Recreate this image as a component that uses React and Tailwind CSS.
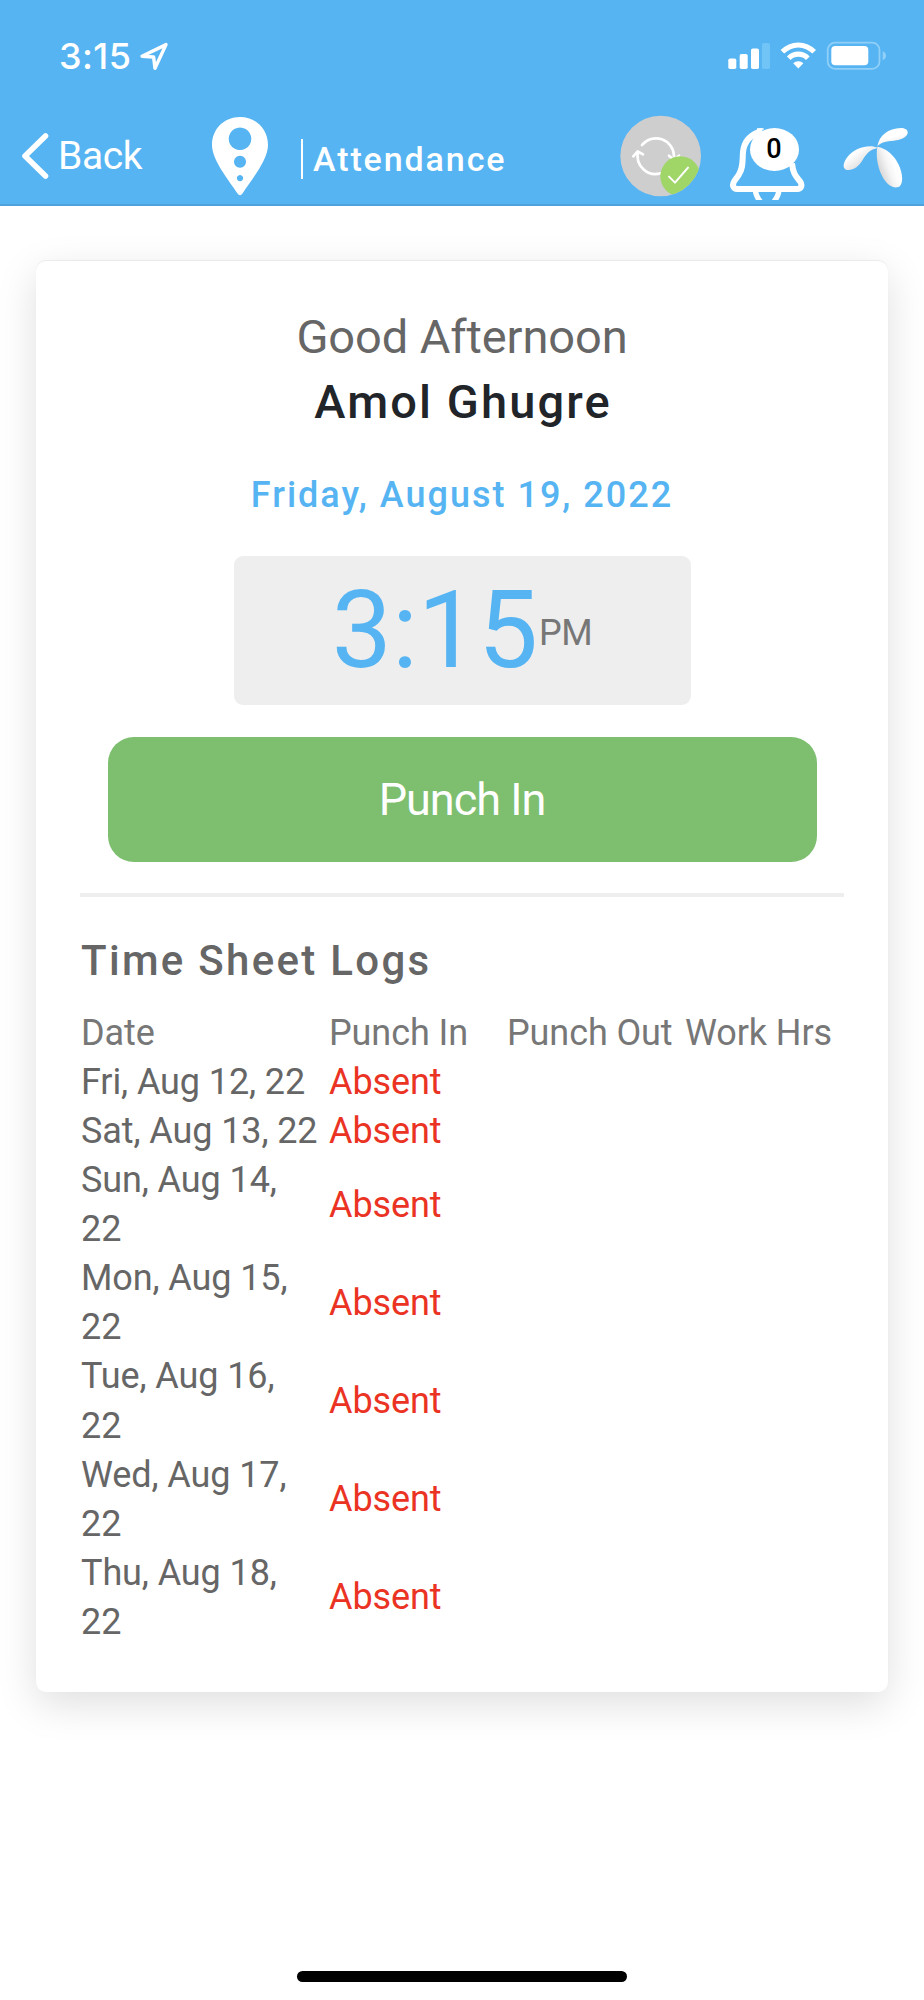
import React from 'react';
import clsx from 'clsx';

const LOGS = [
    { date: 'Fri, Aug 12, 22', status: 'Absent' },
    { date: 'Sat, Aug 13, 22', status: 'Absent' },
    { date: 'Sun, Aug 14, 22', status: 'Absent' },
    { date: 'Mon, Aug 15, 22', status: 'Absent' },
    { date: 'Tue, Aug 16, 22', status: 'Absent' },
    { date: 'Wed, Aug 17, 22', status: 'Absent' },
    { date: 'Thu, Aug 18, 22', status: 'Absent' },
];

const COLUMNS = ['Date', 'Punch In', 'Punch Out', 'Work Hrs'];

const LocationArrow = () => (
    <svg className="ml-[8px] h-[30px] w-[30px]" viewBox="0 0 30 30" fill="none" stroke="#fff" strokeWidth="3.4" strokeLinejoin="round">
        <path d="M3 15.2 L27 3.6 L16 27.3 L14.6 16 Z" />
    </svg>
);

const StatusIcons = () => (
    <svg className="h-[30px] w-[160px]" viewBox="0 0 160 30" fill="#fff">
        {/* Signal */}
        <rect x="0.3" y="17.5" width="8" height="10.5" rx="1.8" />
        <rect x="11.7" y="13" width="8" height="15" rx="1.8" />
        <rect x="23" y="7.5" width="8" height="20.5" rx="1.8" />
        <rect x="34" y="2.1" width="8" height="25.9" rx="1.8" fill="#70c4f6" />
        {/* Wifi */}
        <path d="M52.6 9 A24.5 24.5 0 0 1 88 9 L84.4 12.6 A19.6 19.6 0 0 0 56.2 12.6 Z" />
        <path d="M58.9 15.4 A15.8 15.8 0 0 1 81.700 15.4 L78 19 A10.8 10.8 0 0 0 62.6 19 Z" />
        <path d="M65.2 22.3 A7.4 7.4 0 0 1 75.4 22.3 L70.3 27.4 Z" />
        {/* Battery */}
        <rect x="99.7" y="1.6" width="51.8" height="26.2" rx="7.4" fill="none" stroke="#8fcff8" strokeWidth="1.8" />
        <rect x="103.3" y="5" width="37" height="19.2" rx="4" />
        <path d="M154.7 10.300 Q158 11.600 158 14.800 Q158 18 154.7 19.300 Z" fill="#8fcff8" />
    </svg>
);

const BackChevron = () => (
    <svg className="h-[50px] w-[30px]" viewBox="0 0 30 50" fill="none" stroke="#fff" strokeWidth="5.6" strokeLinecap="round" strokeLinejoin="round">
        <path d="M25.5 5 L5 25 L25.5 45" />
    </svg>
);

const PinIcon = () => (
    <svg className="h-[79px] w-[56px]" viewBox="0 0 56 79">
        <path fill="#fff" fillRule="evenodd" d="M28 0 C44 0 56 12 56 28 C56 43 40 62 30.5 76.5 Q28 80 25.500 76.5 C16 62 0 43 0 28 C0 12 12 0 28 0 Z M28 10.500 a11.300 11.300 0 1 0 0.01 0 Z M28 38.700 a6 6 0 1 0 0.01 0 Z M28 58 a3.100 3.100 0 1 0 0.01 0 Z" />
    </svg>
);

const SyncIcon = () => (
    <svg className="h-[82px] w-[82px]" viewBox="0 0 246 246" fill="none" stroke="#fff" strokeLinecap="round" strokeLinejoin="round">
        <defs>
            <clipPath id="disc"><circle cx="122" cy="123" r="121" /></clipPath>
        </defs>
        <circle cx="122" cy="123" r="121" fill="#cecece" stroke="none" />
        <path d="M66 90 A54 54 0 0 1 162 123 M147 122 L162 135 L177 122" strokeWidth="8" />
        <path d="M54 112 A54 54 0 0 0 122 175 M40 124 L53 109 L69 118" strokeWidth="8" />
        <circle cx="181" cy="184" r="60" fill="#a0d568" stroke="none" clipPath="url(#disc)" />
        <path d="M147 185 L165 203 L204 158" strokeWidth="6" />
    </svg>
);

const BellIcon = () => (
    <div className="relative">
        <svg className="h-[73px] w-[77px]" viewBox="0 0 231 219" fill="none" stroke="#fff" strokeWidth="18">
            <path d="M100 12 C65 22 45 43 42 75 C40 103 43 122 29 144 L16 162 C8 175 13 186 25 186 L205 186 C217 186 221 174 213 163 C199 146 192 139 189 109" strokeLinejoin="round" />
            <path d="M78 178 Q78 208 98 228 M151 178 Q151 208 131 228" strokeWidth="16" />
            <path d="M84 6 H104" strokeWidth="5" />
        </svg>
        <span className="absolute left-[21px] top-[1px] flex h-[43px] w-[49px] items-center justify-center rounded-[50%] bg-white pr-[1px] text-[27px] font-medium leading-none text-black">0</span>
    </div>
);

const BrandLogo = () => (
    <svg className="h-[62px] w-[68px]" viewBox="0 0 204 186">
        <defs>
            <linearGradient id="petalTop" x1="0" y1="0" x2="0.4" y2="1">
                <stop offset="0" stopColor="#fff" />
                <stop offset="0.6" stopColor="#fff" />
                <stop offset="1" stopColor="#e6e6e6" />
            </linearGradient>
            <linearGradient id="petalLeft" x1="0.1" y1="0.2" x2="0.75" y2="0.8">
                <stop offset="0.25" stopColor="#fff" />
                <stop offset="0.65" stopColor="#e9e9e9" />
                <stop offset="1" stopColor="#d3d3d3" />
            </linearGradient>
            <linearGradient id="petalBottom" x1="0.1" y1="0.7" x2="0.8" y2="0.3">
                <stop offset="0" stopColor="#d2d2d2" />
                <stop offset="0.5" stopColor="#f5f5f5" />
                <stop offset="0.8" stopColor="#fff" />
            </linearGradient>
        </defs>
        <path fill="url(#petalLeft)" d="M108 66 C84 54 40 64 18 91 C3 109 1 127 12 131 C30 136 49 123 60 105 C72 84 84 70 108 66 Z" />
        <path fill="url(#petalBottom)" d="M106 62 C100 98 110 137 128 163 C141 182 162 190 174 180 C187 165 180 126 158 96 C140 73 124 66 106 62 Z" />
        <path fill="url(#petalTop)" d="M106 61 C112 28 138 7 177 6 C191 6 199 13 197 22 C193 36 174 43 156 44 C132 46 116 49 106 61 Z" />
    </svg>
);

const Header = () => (
    <header className="h-[206px] border-b-2 border-[#4ea2dc] bg-[#56b4f2] text-white">
        <div className="flex h-[112px] items-center pl-[59px] pr-[36px]">
            <span className="font-['Inter'] text-[36px] font-medium leading-none tracking-[0.4px]">3:15</span>
            <LocationArrow />
            <div className="ml-auto">
                <StatusIcons />
            </div>
        </div>
        <div className="flex h-[88px] items-center pl-[20px] pr-[14px]">
            <BackChevron />
            <span className="ml-[8px] w-[154px] text-[39px] leading-[44px] tracking-[-0.4px]">Back</span>
            <PinIcon />
            <div className="ml-[33px] mt-[5px] h-[40px] w-[2px] bg-white" />
            <span className="ml-[10px] mt-[6px] text-[34px] font-medium leading-[40px] tracking-[1.9px]">Attendance</span>
            <div className="ml-auto flex items-center">
                <SyncIcon />
                <div className="ml-[27px] mt-[15px]">
                    <BellIcon />
                </div>
                <div className="ml-[36px] mt-[2px]">
                    <BrandLogo />
                </div>
            </div>
        </div>
    </header>
);

const LogTable = () => (
    <div className="mt-[18px] pl-px text-[36px] leading-[49.07px] text-[#666]">
        <div className="grid grid-cols-[248px_178px_178px_1fr] text-[#777]">
            {COLUMNS.map((c) => (
                <span key={c} className="whitespace-nowrap tracking-[-0.1px]">{c}</span>
            ))}
        </div>
        {LOGS.map((log) => (
            <div key={log.date} className="grid grid-cols-[248px_178px_178px_1fr] items-center">
                <span className="pr-[6px] tracking-[-0.1px]">{log.date}</span>
                <span className={clsx('tracking-[-0.1px]', log.status === 'Absent' && 'text-[#eb3324]')}>{log.status}</span>
            </div>
        ))}
    </div>
);

export default function App() {
    return (
        <div className="flex h-[2000px] w-[924px] flex-col bg-white font-['Roboto',sans-serif]">
            <Header />
            <main className="mx-[36px] mt-[55px] h-[1431px] rounded-[10px] bg-white px-[44px] pt-[44px] shadow-[0_-1px_1px_rgba(0,0,0,0.06),0_12px_40px_rgba(0,0,0,0.13)]">
                <div className="flex flex-col items-center">
                    <p className="text-[47px] leading-[64.5px] tracking-[-0.1px] text-[#666]">Good Afternoon</p>
                    <p className="pl-[2px] text-[47px] font-medium leading-[64.5px] tracking-[2.1px] text-[#212529]">Amol Ghugre</p>
                    <p className="mt-[36px] text-[36px] font-medium leading-[50px] tracking-[2px] text-[#56b4f2]">Friday, August 19, 2022</p>
                    <div className="mt-[36px] flex h-[149px] w-[457px] items-center justify-center rounded-[9px] bg-[#eee]">
                        <span className="text-[107px] leading-none text-[#56b4f2]">3:15</span>
                        <span className="pl-px pt-[5px] text-[36px] leading-none tracking-[-0.5px] text-[#777]">PM</span>
                    </div>
                    <button className="mt-[32px] h-[125px] w-[709px] rounded-[26px] bg-[#7dbe6f] text-[45px] tracking-[-1px] text-white">Punch In</button>
                </div>
                <hr className="mt-[31px] h-[4px] border-0 bg-[#eee]" />
                <h2 className="mt-[34px] pl-px text-[42px] font-medium leading-[60px] tracking-[2.3px] text-[#666]">Time Sheet Logs</h2>
                <LogTable />
            </main>
            <div className="mx-auto mb-[18px] mt-auto h-[11.500px] w-[330px] rounded-full bg-black" />
        </div>
    );
}
